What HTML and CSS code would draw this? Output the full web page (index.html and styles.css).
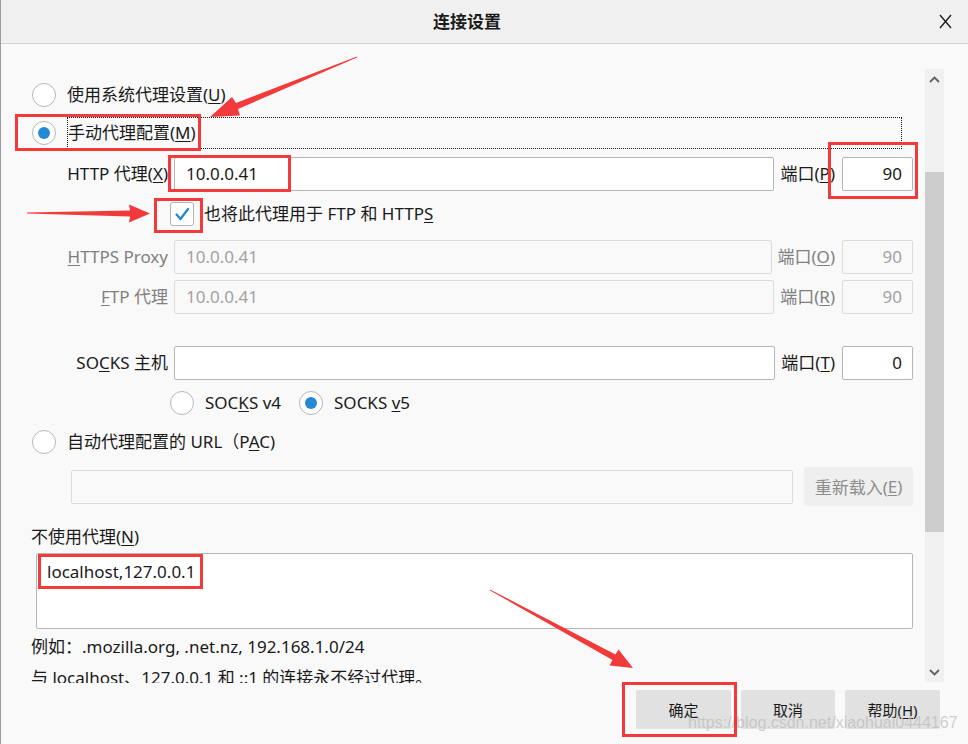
FILE: index.html
```html
<!DOCTYPE html>
<html lang="zh-CN">
<head>
<meta charset="utf-8">
<title>连接设置</title>
<link rel="stylesheet" href="styles.css">
</head>
<body>
<div class="dialog">
  <header class="titlebar">
    <div class="title">连接设置</div>
    <div class="close">
      <svg width="13" height="15" viewBox="0 0 13 15"><path d="M1 1 L12 14 M12 1 L1 14" stroke="#1a1a1a" stroke-width="1.3" fill="none"/></svg>
    </div>
  </header>

  <div class="main">
    <div class="content">
      <div class="row rrow first">
        <span class="radio"></span>
        <span class="rlabel">使用系统代理设置(<u>U</u>)</span>
      </div>
      <div class="row rrow sel-row">
        <span class="radio checked"></span>
        <span class="rlabel focus">手动代理配置(<u>M</u>)</span>
      </div>

      <div class="row frow http-row">
        <span class="flabel">HTTP 代理(<u>X</u>)</span>
        <div class="field">10.0.0.41</div>
        <span class="plabel">端口(<u>P</u>)</span>
        <div class="field port">90</div>
      </div>

      <div class="row crow">
        <span class="checkbox">
          <svg width="22" height="22" viewBox="0 0 22 22"><path d="M5.5 11.5 L9.5 16 L17 6" stroke="#1f88d4" stroke-width="2.2" fill="none" stroke-linecap="round" stroke-linejoin="round"/></svg>
        </span>
        <span class="clabel">也将此代理用于 FTP 和 HTTP<u>S</u></span>
      </div>

      <div class="row frow dis https-row">
        <span class="flabel"><u>H</u>TTPS Proxy</span>
        <div class="field">10.0.0.41</div>
        <span class="plabel">端口(<u>O</u>)</span>
        <div class="field port">90</div>
      </div>
      <div class="row frow dis ftp-row">
        <span class="flabel"><u>F</u>TP 代理</span>
        <div class="field">10.0.0.41</div>
        <span class="plabel">端口(<u>R</u>)</span>
        <div class="field port">90</div>
      </div>

      <div class="row frow socks-row">
        <span class="flabel">SO<u>C</u>KS 主机</span>
        <div class="field"></div>
        <span class="plabel">端口(<u>T</u>)</span>
        <div class="field port">0</div>
      </div>

      <div class="row srow">
        <span class="radio"></span>
        <span class="rlabel">SOC<u>K</u>S v4</span>
        <span class="radio checked second"></span>
        <span class="rlabel">SOCKS <u>v</u>5</span>
      </div>

      <div class="row rrow pac-row">
        <span class="radio"></span>
        <span class="rlabel">自动代理配置的 URL（P<u>A</u>C)</span>
      </div>

      <div class="row urow">
        <div class="field disabled-field"></div>
        <div class="reload">重新载入(<u>E</u>)</div>
      </div>

      <div class="noproxy">不使用代理(<u>N</u>)</div>
      <div class="textarea">localhost,127.0.0.1</div>
      <div class="hint first-hint">例如：.mozilla.org, .net.nz, 192.168.1.0/24</div>
      <div class="hint second-hint">与 localhost、127.0.0.1 和 ::1 的连接永不经过代理。</div>
    </div>

    <div class="scrollbar">
      <div class="sb-btn">
        <svg width="11" height="7" viewBox="0 0 11 7"><path d="M1 6 L5.5 1.5 L10 6" stroke="#606060" stroke-width="1.8" fill="none"/></svg>
      </div>
      <div class="sb-track"><div class="sb-thumb"></div></div>
      <div class="sb-btn">
        <svg width="11" height="7" viewBox="0 0 11 7"><path d="M1 1 L5.5 5.5 L10 1" stroke="#606060" stroke-width="1.8" fill="none"/></svg>
      </div>
    </div>
  </div>

  <footer class="footer">
    <div class="btn ok">确定</div>
    <div class="btn cancel">取消</div>
    <div class="btn help">帮助(<u>H</u>)</div>
  </footer>
</div>

<div class="watermark">https://blog.csdn.net/xiaohuai0444167</div>

<svg class="annot" width="968" height="744" viewBox="0 0 968 744">
  <g fill="none" stroke="#f23a3a" stroke-width="3">
    <rect x="16.5" y="115.5" width="183" height="34"/>
    <rect x="169.5" y="156.5" width="120" height="34"/>
    <rect x="829.5" y="143.5" width="87" height="54"/>
    <rect x="155.5" y="199.5" width="46" height="32"/>
    <rect x="39.5" y="555.5" width="162" height="32"/>
    <rect x="623.5" y="683.5" width="112" height="52"/>
  </g>
  <g fill="#f23a3a">
    <polygon points="357,56.5 236,103 232,97 210,117 240,115.5 238,109 357,57.5"/>
    <polygon points="27,212.6 130,210.5 129,204.5 150,213.5 129,222.5 130,216.5 27,213.6"/>
    <polygon points="490,589.5 615.5,654.5 618.5,649.5 633,668 609.5,665.5 612.5,660 490,590.5"/>
  </g>
</svg>
</body>
</html>
```

FILE: styles.css
```css
* {
  box-sizing: border-box;
}

html,
body {
  margin: 0;
  padding: 0;
}

body {
  position: relative;
  width: 968px;
  height: 744px;
  overflow: hidden;
  background: #f9f9f9;
  font-family: "Noto Sans", "Noto Sans CJK SC", sans-serif;
  font-size: 17px;
  color: #1a1a1a;
}

u {
  text-decoration: underline;
  text-underline-offset: 2px;
}

.dialog {
  width: 968px;
  height: 744px;
  border-left: 1px solid #9c9c9c;
  display: flex;
  flex-direction: column;
}

/* title bar */
.titlebar {
  flex: none;
  height: 44px;
  background: #f0f0f0;
  border-bottom: 1px solid #d3d3d3;
  display: flex;
  align-items: center;
  padding-left: 5px;
}

.title {
  flex: 1;
  text-align: center;
  font-weight: bold;
  font-size: 17px;
  line-height: 22px;
}

.close {
  width: 24px;
  margin-right: 16px;
  display: flex;
  justify-content: flex-end;
  align-items: center;
}

/* main scroll area */
.main {
  flex: none;
  height: 639px;
  display: flex;
  overflow: hidden;
}

.content {
  flex: 1;
  padding: 35px 12px 0 30px;
  overflow: hidden;
}

.row {
  display: flex;
  align-items: center;
}

.rrow {
  height: 32px;
}

.sel-row {
  margin-top: 6px;
}

.radio {
  flex: none;
  width: 24px;
  height: 24px;
  margin-left: 1px;
  border: 1px solid #b7b7b7;
  border-radius: 50%;
  background: #fff;
  display: flex;
  align-items: center;
  justify-content: center;
}

.radio.checked::after {
  content: "";
  width: 12px;
  height: 12px;
  border-radius: 50%;
  background: #2589d3;
}

.rlabel {
  margin-left: 11px;
  line-height: 22px;
  white-space: nowrap;
}

.rlabel.focus {
  flex: 1;
  height: 32px;
  margin-right: 11px;
  border: 1px dotted #1a1a1a;
  display: flex;
  align-items: center;
}

/* field rows */
.frow {
  height: 34px;
}

.http-row {
  margin-top: 8px;
}

.https-row {
  margin-top: 14px;
}

.ftp-row {
  margin-top: 6px;
}

.socks-row {
  margin-top: 32px;
}

.flabel {
  flex: none;
  width: 137px;
  text-align: right;
  line-height: 22px;
  white-space: nowrap;
}

.field {
  flex: 1;
  height: 34px;
  margin-left: 6px;
  background: #fff;
  border: 1px solid #b6b6b6;
  border-radius: 2px;
  padding: 0 11px;
  line-height: 32px;
  white-space: nowrap;
}

.plabel {
  flex: none;
  margin-left: 6px;
  margin-right: 1px;
  line-height: 22px;
  white-space: nowrap;
}

.field.port {
  flex: none;
  width: 71px;
  text-align: right;
  padding-right: 10px;
}

.dis .flabel,
.dis .plabel {
  color: #7f7f7f;
}

.dis .field {
  background: #f9f9f9;
  border-color: #dcdcdc;
  color: #a2a2a2;
}

/* checkbox row */
.crow {
  height: 24px;
  margin-top: 11px;
}

.checkbox {
  flex: none;
  width: 24px;
  height: 24px;
  margin-left: 139px;
  border: 1px solid #b4b4b4;
  border-radius: 3px;
  background: #fff;
  display: flex;
  align-items: center;
  justify-content: center;
}

.clabel {
  margin-left: 10px;
  line-height: 22px;
  white-space: nowrap;
}

/* socks version radios */
.srow {
  height: 24px;
  margin-top: 11px;
  padding-left: 138px;
}

.radio.second {
  margin-left: 18px;
}

.pac-row {
  height: 24px;
  margin-top: 15px;
}

/* url row */
.urow {
  height: 39px;
  margin-top: 13px;
  padding-left: 34px;
}

.disabled-field {
  background: #f9f9f9;
  border-color: #dcdcdc;
}

.reload {
  flex: none;
  width: 109px;
  height: 39px;
  margin-left: 11px;
  background: #efefef;
  border-radius: 2px;
  color: #8c8c8c;
  display: flex;
  align-items: center;
  justify-content: center;
  white-space: nowrap;
}

.noproxy {
  margin-top: 20px;
  line-height: 22px;
}

.textarea {
  height: 76px;
  margin-top: 5px;
  margin-left: 5px;
  background: #fff;
  border: 1px solid #b6b6b6;
  border-radius: 2px;
  padding: 7px 10px;
  line-height: 22px;
}

.hint {
  line-height: 22px;
  white-space: nowrap;
}

.first-hint {
  margin-top: 7px;
}

.second-hint {
  margin-top: 9px;
}

/* scrollbar */
.scrollbar {
  flex: none;
  width: 19px;
  margin: 25px 24px 1px 0;
  background: #f0f0f0;
  display: flex;
  flex-direction: column;
}

.sb-btn {
  flex: none;
  height: 20px;
  display: flex;
  align-items: center;
  justify-content: center;
}

.sb-track {
  flex: 1;
}

.sb-thumb {
  margin-top: 83px;
  height: 360px;
  background: #cdcdcd;
}

/* footer buttons */
.footer {
  flex: none;
  height: 61px;
  display: flex;
  justify-content: flex-end;
  align-items: flex-start;
  gap: 10px;
  padding: 7px 28px 0 0;
}

.btn {
  height: 39px;
  background: #e1e1e1;
  border-radius: 2px;
  font-size: 15px;
  display: flex;
  align-items: center;
  justify-content: center;
  white-space: nowrap;
}

.ok {
  width: 95px;
}

.cancel {
  width: 94px;
}

.help {
  width: 95px;
}

/* overlays */
.watermark {
  position: absolute;
  left: 688px;
  top: 714px;
  font-family: "Liberation Sans", sans-serif;
  font-size: 16px;
  line-height: 18px;
  color: rgba(190, 190, 190, 0.75);
  white-space: nowrap;
  pointer-events: none;
}

.annot {
  position: absolute;
  left: 0;
  top: 0;
  pointer-events: none;
}
```
